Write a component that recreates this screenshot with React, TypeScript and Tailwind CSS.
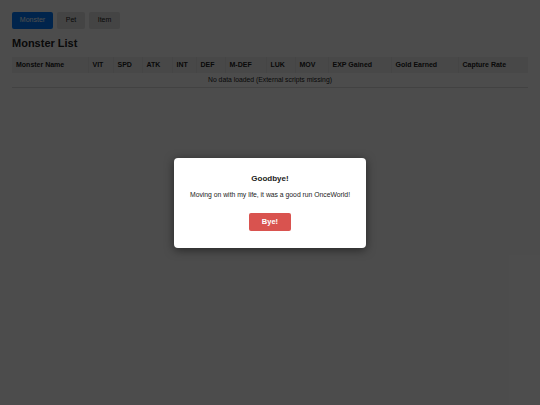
import React from "react";

const cols: [string, number][] = [
  ["Monster Name", 76],
  ["VIT", 25],
  ["SPD", 29],
  ["ATK", 30],
  ["INT", 24],
  ["DEF", 29],
  ["M-DEF", 41],
  ["LUK", 29],
  ["MOV", 33],
  ["EXP Gained", 63],
  ["Gold Earned", 67],
  ["Capture Rate", 70],
];

export default function App() {
  return (
    <div className="relative w-[540px] h-[405px] bg-white overflow-hidden text-[#222]" style={{ fontFamily: '"Liberation Sans", Arial, sans-serif' }}>
      <div className="px-3 pt-3">
        <div className="flex gap-[4px]">
          <button className="h-[17px] w-[41px] bg-[#007bff] text-white text-[7px] rounded-[2px]">Monster</button>
          <button className="h-[17px] w-[28px] bg-[#e4e4e4] text-[#222] text-[7px] rounded-[2px]">Pet</button>
          <button className="h-[17px] w-[31px] bg-[#e4e4e4] text-[#222] text-[7px] rounded-[2px]">Item</button>
        </div>
        <h2 className="mt-[7px] text-[11px] font-bold leading-[14px]">Monster List</h2>
        <table className="mt-[7px] border-collapse text-[7px] w-[516px] table-fixed">
          <thead>
            <tr className="bg-[#f2f2f2] h-[16px]">
              {cols.map(([c, w]) => (
                <th key={c} style={{ width: w }} className="text-left font-bold pl-[4px] pr-[2px] border-r border-[#e8e8e8] last:border-r-0">
                  {c}
                </th>
              ))}
            </tr>
          </thead>
          <tbody>
            <tr className="h-[14px] border-b border-[#dcdcdc]">
              <td colSpan={12} className="text-center text-[6.8px]">No data loaded (External scripts missing)</td>
            </tr>
          </tbody>
        </table>
      </div>
      <div className="absolute inset-0 bg-black/70 flex items-center justify-center">
        <div className="w-[192px] h-[90px] bg-white rounded-[4px] shadow-[0_2px_10px_rgba(0,0,0,0.5)] flex flex-col items-center">
          <div className="mt-[16px] text-[8px] font-bold leading-[10px]">Goodbye!</div>
          <div className="mt-[6px] text-[6.8px] leading-[9px] text-[#222]">Moving on with my life, it was a good run OnceWorld!</div>
          <button className="mt-[14px] w-[42px] h-[18px] bg-[#d9534f] text-white text-[7.5px] font-bold rounded-[2px]">Bye!</button>
        </div>
      </div>
    </div>
  );
}
